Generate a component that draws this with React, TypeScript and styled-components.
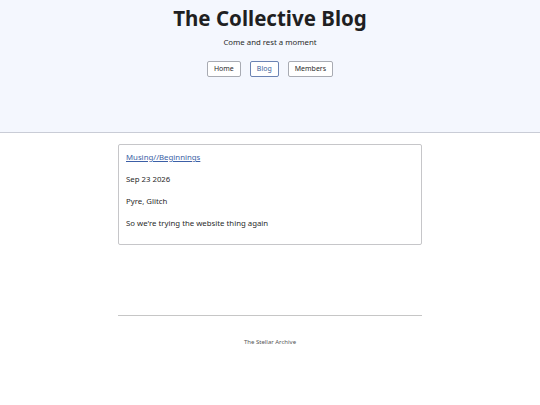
import styled, { createGlobalStyle } from "styled-components";

const GlobalStyle = createGlobalStyle`
  html, body {
    margin: 0;
    padding: 0;
    background: #ffffff;
    font-family: "Noto Sans", "Open Sans", sans-serif;
    color: #222222;
  }
`;

const Header = styled.header`
  background: #f4f7fe;
  border-bottom: 1px solid #c9ccd6;
  height: 133px;
  box-sizing: border-box;
  display: flex;
  flex-direction: column;
  align-items: center;
  padding-top: 5px;
`;

const Title = styled.h1`
  margin: 0;
  font-size: 20.5px;
  font-weight: 700;
  line-height: 27px;
  color: #1f1f22;
`;

const Tagline = styled.p`
  margin: 5px 0 0;
  font-size: 7.8px;
  line-height: 11px;
  color: #2a2a2a;
`;

const Nav = styled.nav`
  display: flex;
  gap: 9px;
  margin-top: 13px;
`;

const NavButton = styled.button<{ $active?: boolean }>`
  height: 16px;
  padding: 0 6px;
  font-family: inherit;
  font-size: 7px;
  line-height: 14px;
  background: #ffffff;
  border: 1px solid ${(p) => (p.$active ? "#6b83b3" : "#a8abb3")};
  border-radius: 2px;
  color: ${(p) => (p.$active ? "#3d5f9c" : "#2a2a2a")};
  cursor: pointer;
`;

const Main = styled.main`
  width: 304px;
  margin: 11px auto 0;
`;

const Post = styled.article`
  border: 1px solid #c6c6c9;
  border-radius: 2px;
  height: 101px;
  box-sizing: border-box;
  padding: 6px 7px;
  display: flex;
  flex-direction: column;
  gap: 9px;
`;

const PostLink = styled.a`
  font-size: 7.8px;
  line-height: 13px;
  color: #3c5fa6;
  text-decoration: underline;
`;

const PostLine = styled.p`
  margin: 0;
  font-size: 7.8px;
  line-height: 13px;
  color: #2a2a2a;
`;

const Footer = styled.footer`
  width: 304px;
  margin: 70px auto 0;
  border-top: 1px solid #c6c6c6;
  padding-top: 22px;
  text-align: center;
  font-size: 6px;
  color: #555555;
`;

const App = () => {
  return (
    <>
      <GlobalStyle />
      <Header>
        <Title>The Collective Blog</Title>
        <Tagline>Come and rest a moment</Tagline>
        <Nav>
          <NavButton>Home</NavButton>
          <NavButton $active>Blog</NavButton>
          <NavButton>Members</NavButton>
        </Nav>
      </Header>
      <Main>
        <Post>
          <PostLink href="#">Musing//Beginnings</PostLink>
          <PostLine>Sep 23 2026</PostLine>
          <PostLine>Pyre, Glitch</PostLine>
          <PostLine>So we're trying the website thing again</PostLine>
        </Post>
      </Main>
      <Footer>The Stellar Archive</Footer>
    </>
  );
};

export default App;
